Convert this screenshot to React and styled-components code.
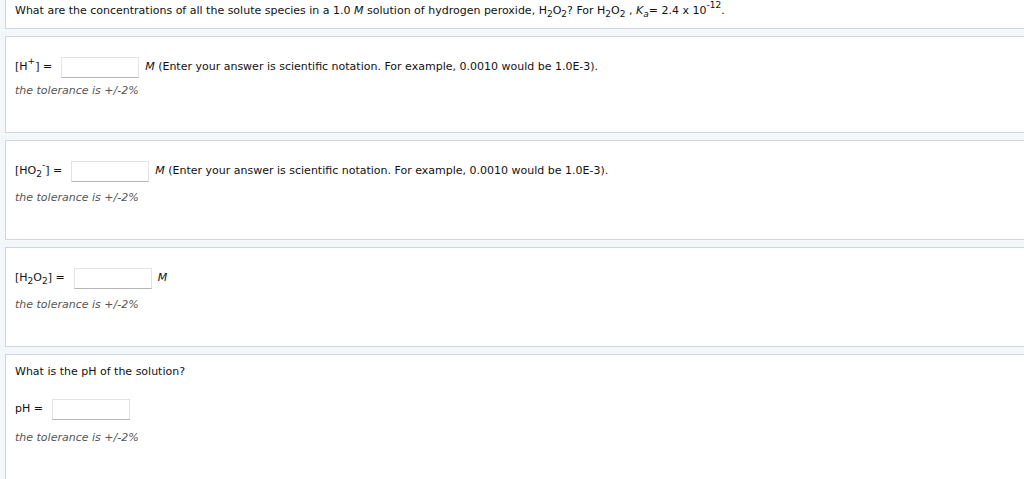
import React from 'react';
import styled, { createGlobalStyle } from 'styled-components';

const GlobalStyle = createGlobalStyle`
  html, body {
    margin: 0;
    padding: 0;
    background: #f3f7fa;
    overflow: hidden;
  }
  body {
    font-family: Verdana, "DejaVu Sans", sans-serif;
    font-size: 11px;
    color: #111;
  }
`;

const Page = styled.div`
  width: 1060px;
  padding-left: 5px;
`;

const Card = styled.section`
  background: #fff;
  border: 1px solid #ccd5e0;
  border-top: ${(p) => (p.clipped ? 'none' : '1px solid #ccd5e0')};
  padding: ${(p) => (p.clipped ? '4px 9px 10px' : `10px 9px ${p.tall ? 80 : 34}px`)};
  margin-bottom: 7px;
`;

const Prompt = styled.p`
  margin: 0 0 14px;
  line-height: 14px;

  &:last-child {
    margin-bottom: 0;
  }
`;

const Row = styled.div`
  display: flex;
  align-items: center;
  min-height: 22px;
  margin-top: ${(p) => (p.spaced ? 19 : 9)}px;
  padding-bottom: ${(p) => (p.subscripted ? 3 : 0)}px;
  line-height: 14px;
`;

const Label = styled.span`
  margin-right: 9px;
  white-space: nowrap;
`;

const AnswerBox = styled.input`
  box-sizing: border-box;
  width: 78px;
  height: 21px;
  border: 1px solid #e3e3e3;
  border-bottom-color: #b5b5b5;
  background: #fff;
  margin: 0 6px 0 0;
  padding: 0 4px;
  font: inherit;
`;

const Unit = styled.span`
  white-space: nowrap;
  em {
    font-style: italic;
  }
`;

const Tolerance = styled.p`
  margin: ${(p) => (p.spaced ? 11 : 6)}px 0 0;
  line-height: 14px;
  font-style: italic;
  color: #555;
`;

const Sub = styled.sub`
  font-size: 9px;
  line-height: 0;
  vertical-align: -3px;
`;

const Sup = styled.sup`
  font-size: 9px;
  line-height: 0;
  vertical-align: 6px;
`;

const H2O2 = () => (
  <>
    H<Sub>2</Sub>O<Sub>2</Sub>
  </>
);

const NOTE = ' (Enter your answer is scientific notation. For example, 0.0010 would be 1.0E-3).';

const Answer = ({ label, note, spaced, subscripted }) => (
  <Row spaced={spaced} subscripted={subscripted}>
    <Label>{label}</Label>
    <AnswerBox type="text" />
    {note !== undefined && (
      <Unit>
        <em>M</em>
        {note}
      </Unit>
    )}
  </Row>
);

export default function App() {
  return (
    <>
      <GlobalStyle />
      <Page>
        <Card clipped>
          <Prompt>
            What are the concentrations of all the solute species in a 1.0 <em>M</em> solution of
            hydrogen peroxide, <H2O2 />? For <H2O2 /> , <em>K</em>
            <Sub><em>a</em></Sub>= 2.4 x 10<Sup>-12</Sup>.
          </Prompt>
        </Card>

        <Card>
          <Answer label={<>[H<Sup>+</Sup>] =</>} note={NOTE} />
          <Tolerance>the tolerance is +/-2%</Tolerance>
        </Card>

        <Card>
          <Answer label={<>[HO<Sub>2</Sub><Sup>-</Sup>] =</>} note={NOTE} subscripted />
          <Tolerance>the tolerance is +/-2%</Tolerance>
        </Card>

        <Card>
          <Answer label={<>[<H2O2 />] =</>} note="" subscripted />
          <Tolerance>the tolerance is +/-2%</Tolerance>
        </Card>

        <Card tall>
          <Prompt>What is the pH of the solution?</Prompt>
          <Answer label="pH =" spaced />
          <Tolerance spaced>the tolerance is +/-2%</Tolerance>
        </Card>
      </Page>
    </>
  );
}
